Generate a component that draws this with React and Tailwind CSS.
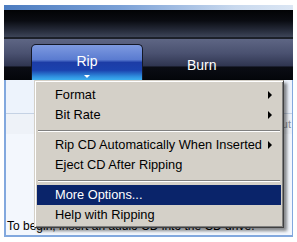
export default function App() {
  const items = [
    { label: 'Format', sub: true },
    { label: 'Bit Rate', sub: true },
    { sep: true },
    { label: 'Rip CD Automatically When Inserted', sub: true },
    { label: 'Eject CD After Ripping' },
    { sep: true },
    { label: 'More Options...', active: true },
    { label: 'Help with Ripping' },
  ]

  return (
    <div className="relative w-[297px] h-[242px] bg-white pl-[4px] pt-[5px] font-['Liberation_Sans',Arial,sans-serif] overflow-hidden">
      <div className="w-[289px] h-[232px] flex flex-col">
        {/* top strip */}
        <div className="h-[5px] bg-[linear-gradient(to_right,#4c7cc0,#7aa0d6_40%,#c9d9ee_80%,#dbe6f4)]"></div>
        {/* black bar */}
        <div className="h-[27px] bg-[linear-gradient(to_bottom,#020305,#0a0c12_40%,#2a3040_80%,#3d4558)]"></div>
        <div className="h-[2px] bg-[#1c2029]"></div>
        {/* tab bar */}
        <div className="h-[41px] flex items-start pt-[5px] bg-[linear-gradient(to_bottom,#5e6684,#4a5170_35%,#2f3550_66%,#0a0c14_68%,#04060a)]">
          <div className="ml-[27px] w-[112px] h-[36px] rounded-t-[5px] border border-b-0 border-[#141826] flex flex-col items-center bg-[linear-gradient(to_bottom,#7e9ae0,#5a7bd0_42%,#1c3ca6_50%,#1b42ae_72%,#2f8ede_90%,#3cb0f0)]">
            <div className="mt-[8px] text-[14px] leading-[16px] text-white">Rip</div>
            <div className="mt-[6px] w-0 h-0 border-x-[3px] border-x-transparent border-t-[3px] border-t-white"></div>
          </div>
          <div className="ml-[44px] mt-[13px] text-[14px] leading-[16px] text-white">Burn</div>
        </div>
        {/* content */}
        <div className="flex-1 flex flex-col border-l-2 border-r border-b-2 border-[#82a8de] bg-[#f3f7fd]">
          <div className="h-[33px] bg-[#edf3fc]"></div>
          <div className="h-px bg-[#c5d2e4]"></div>
          <div className="h-[20px] bg-[#eef2f8] flex items-center justify-end pr-[1px] text-[11px] text-[#8a8f98]">About</div>
          <div className="flex-1 flex items-end pb-[2px] pl-px text-[12px] leading-[14px] text-black">
            To begin, insert an audio CD into the CD drive.
          </div>
        </div>
      </div>

      {/* dropdown menu */}
      <div className="absolute left-[34px] top-[80px] w-[250px] bg-[#d4d0c8] border border-t-[#d4d0c8] border-l-[#d4d0c8] border-r-[#404040] border-b-[#404040] shadow-[inset_1px_1px_0_#ffffff,inset_-1px_-1px_0_#808080,3px_3px_3px_rgba(0,0,0,0.45)] px-[2px] pt-[4px] pb-[2px] text-[12.8px] text-black">
        {items.map((it, i) =>
          it.sep ? (
            <div key={i} className="h-[10px] pt-[5px] px-[1px]">
              <div className="h-px bg-[#808080]"></div>
              <div className="h-px bg-white"></div>
            </div>
          ) : (
            <div
              key={i}
              className={`h-[20px] flex items-center justify-between pl-[18px] pr-[9px] ${it.active ? 'bg-[#0a246a] text-white' : ''}`}
            >
              <span>{it.label}</span>
              {it.sub && (
                <span className="w-0 h-0 border-y-[4px] border-y-transparent border-l-[4px] border-l-black"></span>
              )}
            </div>
          )
        )}
      </div>
    </div>
  )
}
